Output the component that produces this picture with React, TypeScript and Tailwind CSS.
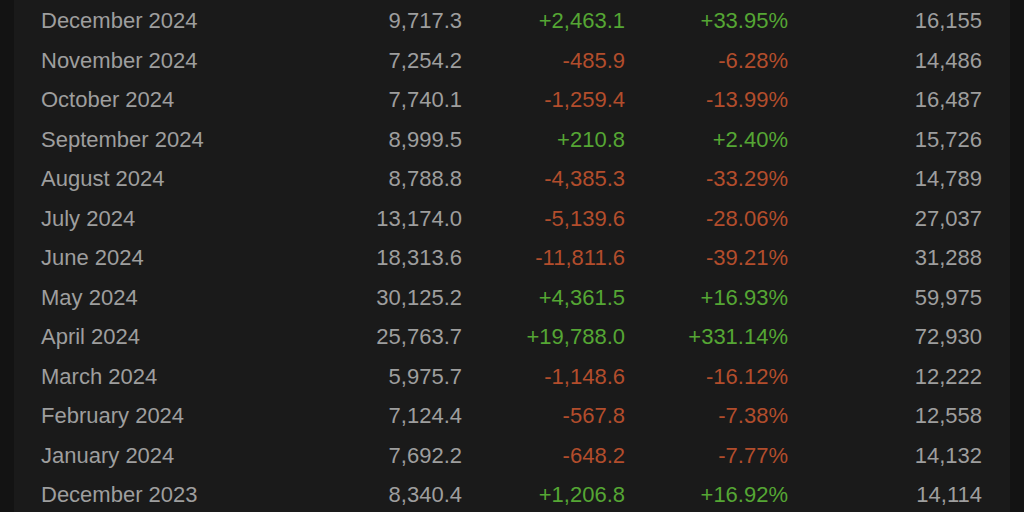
import React from "react";

const rows: [string, string, string, string, string][] = [
  ["December 2024", "9,717.3", "+2,463.1", "+33.95%", "16,155"],
  ["November 2024", "7,254.2", "-485.9", "-6.28%", "14,486"],
  ["October 2024", "7,740.1", "-1,259.4", "-13.99%", "16,487"],
  ["September 2024", "8,999.5", "+210.8", "+2.40%", "15,726"],
  ["August 2024", "8,788.8", "-4,385.3", "-33.29%", "14,789"],
  ["July 2024", "13,174.0", "-5,139.6", "-28.06%", "27,037"],
  ["June 2024", "18,313.6", "-11,811.6", "-39.21%", "31,288"],
  ["May 2024", "30,125.2", "+4,361.5", "+16.93%", "59,975"],
  ["April 2024", "25,763.7", "+19,788.0", "+331.14%", "72,930"],
  ["March 2024", "5,975.7", "-1,148.6", "-16.12%", "12,222"],
  ["February 2024", "7,124.4", "-567.8", "-7.38%", "12,558"],
  ["January 2024", "7,692.2", "-648.2", "-7.77%", "14,132"],
  ["December 2023", "8,340.4", "+1,206.8", "+16.92%", "14,114"],
];

export default function App() {
  return (
    <div
      className="w-[1024px] h-[512px] overflow-hidden bg-[#131313] px-[14px]"
      style={{ fontFamily: '"Liberation Sans", Arial, sans-serif' }}
    >
      <div className="h-full bg-[#1a1a1a] pl-[27px] pt-[1px]">
        {rows.map((r) => {
          const up = r[2].startsWith("+");
          const c = up ? "text-[#55a634]" : "text-[#b24d2c]";
          return (
            <div key={r[0]} className="flex items-center h-[39.5px] text-[22px] text-[#9e9e9e]">
              <div className="w-[260px]">{r[0]}</div>
              <div className="w-[161px] text-right">{r[1]}</div>
              <div className={`w-[163px] text-right ${c}`}>{r[2]}</div>
              <div className={`w-[163px] text-right ${c}`}>{r[3]}</div>
              <div className="w-[194px] text-right">{r[4]}</div>
            </div>
          );
        })}
      </div>
    </div>
  );
}
